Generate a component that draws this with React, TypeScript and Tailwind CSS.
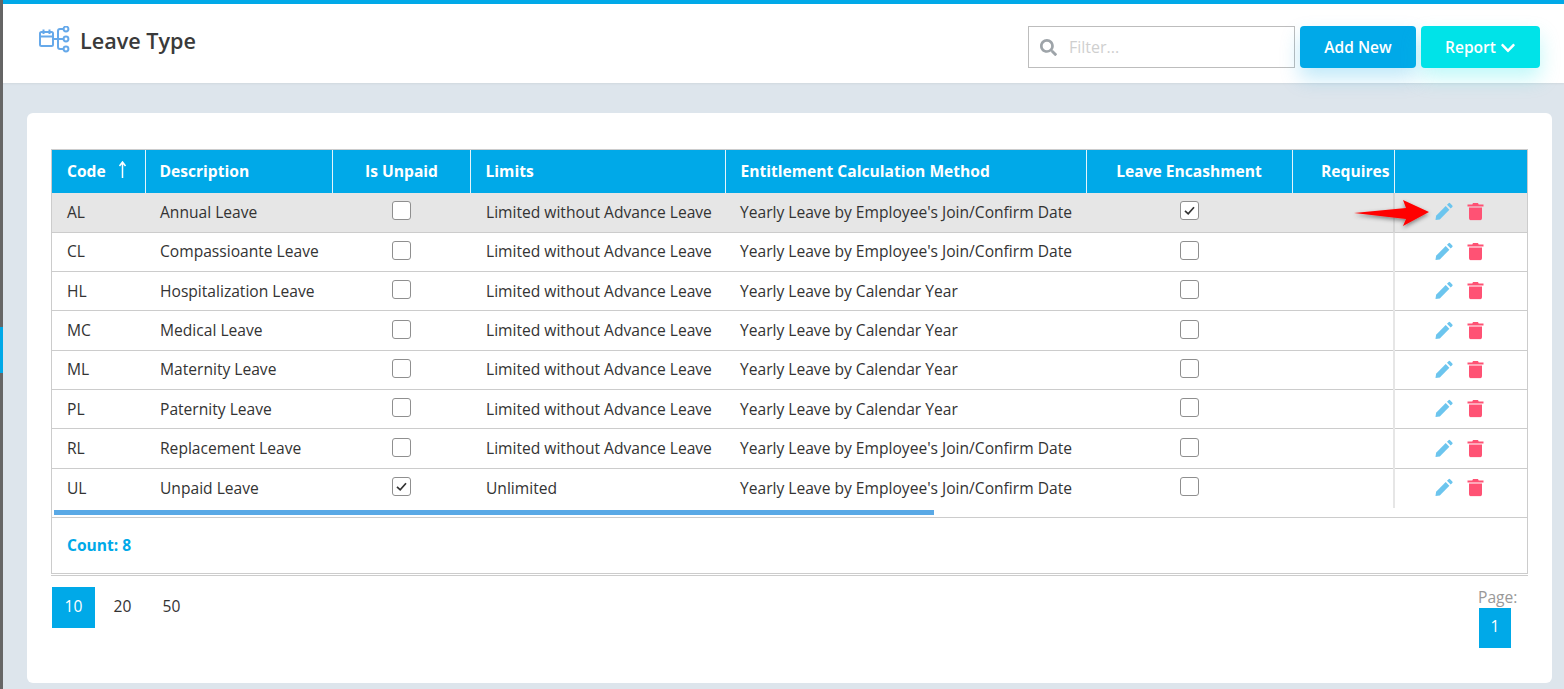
import React from "react";
import { FaChevronDown, FaSearch } from "react-icons/fa";

const rows = [
  { code: "AL", name: "Annual Leave", limit: "Limited without Advance Leave", method: "Yearly Leave by Employee's Join/Confirm Date", encash: true },
  { code: "CL", name: "Compassioante Leave", limit: "Limited without Advance Leave", method: "Yearly Leave by Employee's Join/Confirm Date" },
  { code: "HL", name: "Hospitalization Leave", limit: "Limited without Advance Leave", method: "Yearly Leave by Calendar Year" },
  { code: "MC", name: "Medical Leave", limit: "Limited without Advance Leave", method: "Yearly Leave by Calendar Year" },
  { code: "ML", name: "Maternity Leave", limit: "Limited without Advance Leave", method: "Yearly Leave by Calendar Year" },
  { code: "PL", name: "Paternity Leave", limit: "Limited without Advance Leave", method: "Yearly Leave by Calendar Year" },
  { code: "RL", name: "Replacement Leave", limit: "Limited without Advance Leave", method: "Yearly Leave by Employee's Join/Confirm Date" },
  { code: "UL", name: "Unpaid Leave", limit: "Unlimited", method: "Yearly Leave by Employee's Join/Confirm Date", unpaid: true },
];

const Check = ({ on }: { on?: boolean }) => (
  <div className="mx-auto mt-[-3px] flex h-[19px] w-[19px] items-center justify-center rounded-[3px] border border-[#8f8f8f] bg-white">
    {on && (
      <svg width="13" height="13" viewBox="0 0 13 13" fill="none">
        <path d="M2 6.8l3.2 3L11 3.2" stroke="#333" strokeWidth="1.7" />
      </svg>
    )}
  </div>
);

const Pencil = () => (
  <svg width="18" height="18" viewBox="0 0 18 18" fill="#6cc5ee">
    <path d="M0.5 17.5l0.6-4.3L10.7 3.6l3.7 3.7-9.6 9.6z" />
    <path d="M12 2.3l1.6-1.6c.5-.5 1-.5 1.5 0l2.2 2.2c.5.5.5 1 0 1.5l-1.6 1.6z" />
  </svg>
);

const Trash = () => (
  <svg width="17" height="18" viewBox="0 0 17 18" fill="#ff5274">
    <path d="M6 0.5h5l.7 1.5H16.500v2H.5V2h4.800z" />
    <path d="M2 5h13v10.500c0 1.400-.9 2.300-2.300 2.300H4.300C2.900 17.800 2 16.900 2 15.500z" />
  </svg>
);

const HeaderIcon = () => (
  <svg width="32" height="27" viewBox="0 0 32 27" fill="none" stroke="#66a9ea" strokeWidth="2" className="mt-[-4px]">
    <rect x="1" y="6" width="13" height="14" rx="1.500" />
    <path d="M1 10.500h13M4.500 3.500v4.500M10.500 3.500v4.500" />
    <path d="M14 13h10M24 3h-3a2 2 0 0 0-2 2v16a2 2 0 0 0 2 2h3" />
    <circle cx="27" cy="3" r="2.400" />
    <circle cx="27" cy="13" r="2.400" />
    <circle cx="27" cy="23" r="2.400" />
  </svg>
);

export default function App() {
  return (
    <div className="flex h-[689px] w-full overflow-hidden bg-[#dde5ec] font-['Open_Sans','Noto_Sans',sans-serif] text-[15.600px] text-[#333]">
      {/* left sidebar edge */}
      <div className="flex w-[3px] shrink-0 flex-col bg-[#666]">
        <div className="h-[327px]" />
        <div className="h-[46px] bg-[#00a9e8]" />
      </div>

      <div className="relative min-w-0 flex-1">
        <header className="flex h-[83px] justify-between border-t-4 border-[#00a9e8] bg-white pr-6 pl-[36px] shadow-[0_1px_2px_rgba(0,0,0,0.06)]">
          <div className="flex h-[74px] items-center gap-[9px]">
            <HeaderIcon />
            <h1 className="text-[21.600px] font-semibold text-[#3a3a3a]">Leave Type</h1>
          </div>
          <div className="flex items-start gap-[5px] pt-[22px]">
            <div className="flex h-[42px] w-[267px] items-center gap-[12px] border border-[#bdbdbd] bg-white pl-[11px]">
              <FaSearch className="text-[17px] text-[#9ea4a9]" />
              <span className="text-[16px] text-[#cfcfcf]">Filter...</span>
            </div>
            <button className="h-[42px] w-[116px] rounded-[4px] bg-[#00a9e8] pt-[1px] text-[15.500px] font-semibold text-white shadow-[0_10px_20px_rgba(0,169,232,0.25)]">
              Add New
            </button>
            <button className="flex h-[42px] w-[119px] items-center justify-center gap-[4px] rounded-[4px] bg-[#00e3e8] pt-[1px] text-[15.500px] font-semibold text-white shadow-[0_10px_20px_rgba(0,227,232,0.25)]">
              Report <FaChevronDown className="text-[16px]" />
            </button>
          </div>
        </header>

        <main className="mt-[30px] mr-3 ml-6 h-[570px] rounded-[6px] bg-white px-6 pt-9">
          <div className="border border-[#ccc] border-b-0">
            <table className="w-full table-fixed border-collapse">
              <colgroup>
                <col className="w-[93px]" />
                <col className="w-[187px]" />
                <col className="w-[138px]" />
                <col className="w-[255px]" />
                <col className="w-[361px]" />
                <col className="w-[206px]" />
                <col className="w-[102px]" />
                <col />
              </colgroup>
              <thead>
                <tr className="h-[43px] bg-[#00a9e8] text-left text-[15.600px] font-bold text-white">
                  <th className="border-r border-[#e4f4fb] pl-[15px] font-bold">
                    <span className="inline-flex items-center gap-[12px]">
                      Code
                      <svg width="9" height="17" viewBox="0 0 9 17" fill="none" stroke="white" strokeWidth="1.500" className="mt-[-4px]">
                        <path d="M4.500 17V1.500M1.500 5l3-4 3 4" />
                      </svg>
                    </span>
                  </th>
                  <th className="border-r border-[#e4f4fb] pl-[14px] font-bold">Description</th>
                  <th className="border-r border-[#e4f4fb] pl-[1px] text-center font-bold">Is Unpaid</th>
                  <th className="border-r border-[#e4f4fb] pl-[15px] font-bold">Limits</th>
                  <th className="border-r border-[#e4f4fb] pl-[15px] font-bold">Entitlement Calculation Method</th>
                  <th className="border-r border-[#e4f4fb] text-center font-bold">Leave Encashment</th>
                  <th className="border-r border-[#e4f4fb] pr-[4px] text-right font-bold">Requires</th>
                  <th />
                </tr>
              </thead>
              <tbody>
                {rows.map((r, i) => (
                  <tr key={r.code} className={`h-[39.330px] border-b border-[#ccc] ${i === 0 ? "bg-[#e6e6e6]" : "bg-white"} last:border-b-0`}>
                    <td className="pl-[15px]">{r.code}</td>
                    <td className="truncate pl-[15px]">{r.name}</td>
                    <td><Check on={r.unpaid} /></td>
                    <td className="truncate pl-[16px]">{r.limit}</td>
                    <td className="truncate pl-[15px]">{r.method}</td>
                    <td><Check on={r.encash} /></td>
                    <td />
                    <td className={`border-l-2 ${i === 0 ? "border-[#d4d4d4]" : "border-[#e6e6e6]"}`}>
                      <div className="flex -translate-y-[0.5px] items-center gap-[14px] pl-[40px]">
                        <Pencil />
                        <Trash />
                      </div>
                    </td>
                  </tr>
                ))}
              </tbody>
            </table>
            {/* horizontal scrollbar */}
            <div className="h-[9px] pt-[2px] pl-[2px]">
              <div className="h-[5px] w-[880px] bg-[#5aa9e6]" />
            </div>
            <div className="flex h-[57px] items-center border-t border-b border-[#ccc] pt-[1px] pl-[15px] font-bold text-[#00a9e8]">
              Count: 8
            </div>
          </div>
          <div className="mt-[1px] border-t border-[#ccc]" />

          <div className="flex items-start justify-between pl-[1px]">
            <div className="mt-[11px] flex items-center text-[15.600px]">
              <span className="flex h-[41px] w-[43px] items-center justify-center bg-[#00a9e8] pb-[1px] text-white">10</span>
              <span className="flex h-[41px] w-[55px] items-center justify-center pb-[1px]">20</span>
              <span className="flex h-[41px] w-[43px] items-center justify-center pb-[1px]">50</span>
            </div>
            <div className="mt-[12px] mr-[10px] flex w-[39px] flex-col items-start text-[15.600px] text-[#999]">
              <span className="-translate-x-[1px] -translate-y-[1px] leading-[20px] whitespace-nowrap">Page:</span>
              <span className="flex h-[40px] w-[32px] items-center justify-center bg-[#00a9e8] pb-[1px] text-white">1</span>
            </div>
          </div>
        </main>

        {/* annotation arrow over the first row */}
        <svg width="90" height="40" viewBox="0 0 90 40" className="absolute top-[193px] left-[1347px]">
          <defs>
            <filter id="arrowShadow" x="-20%" y="-40%" width="140%" height="180%">
              <feDropShadow dx="0" dy="2" stdDeviation="2" floodColor="#000" floodOpacity="0.45" />
            </filter>
          </defs>
          <path d="M4 20L56 15 53 7 79 19 53 33 56 26z" fill="#ff0000" filter="url(#arrowShadow)" />
        </svg>
      </div>
    </div>
  );
}
